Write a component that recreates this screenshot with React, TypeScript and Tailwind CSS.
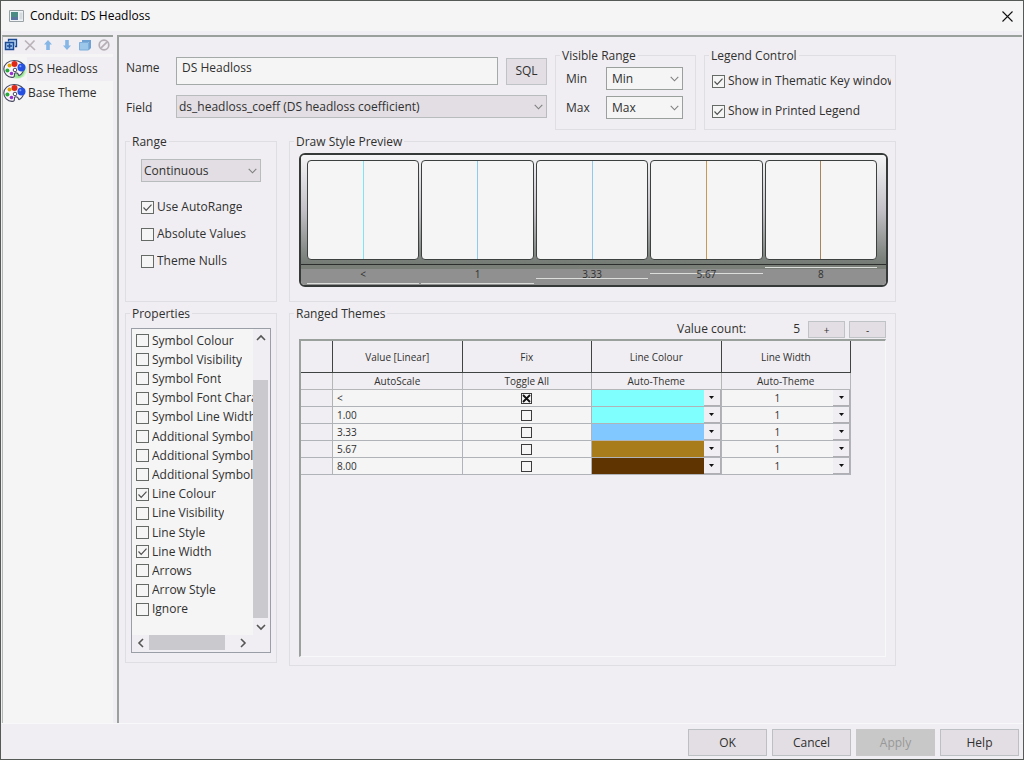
import { useState } from "react";
import type { ReactNode } from "react";
import clsx from "clsx";

const themes = [
  { value: "<", label: "<", colour: "bg-[#80ffff]", line: "bg-[#80e4f4]", mark: "top-[18px]", fix: true },
  { value: "1.00", label: "1", colour: "bg-[#80ffff]", line: "bg-[#8cccee]", mark: "top-[18px]", fix: false },
  { value: "3.33", label: "3.33", colour: "bg-[#80c8ff]", line: "bg-[#90c8f0]", mark: "top-[13px]", fix: false },
  { value: "5.67", label: "5.67", colour: "bg-[#a87c1a]", line: "bg-[#c89a50]", mark: "top-[8px]", fix: false },
  { value: "8.00", label: "8", colour: "bg-[#603400]", line: "bg-[#a88458]", mark: "top-[2px]", fix: false },
];

const properties = [
  { name: "Symbol Colour" },
  { name: "Symbol Visibility" },
  { name: "Symbol Font" },
  { name: "Symbol Font Chara" },
  { name: "Symbol Line Width" },
  { name: "Additional Symbol" },
  { name: "Additional Symbol" },
  { name: "Additional Symbol" },
  { name: "Line Colour", checked: true },
  { name: "Line Visibility" },
  { name: "Line Style" },
  { name: "Line Width", checked: true },
  { name: "Arrows" },
  { name: "Arrow Style" },
  { name: "Ignore" },
];

function Group({ title, className, children }: { title: string; className?: string; children: ReactNode }) {
  return (
    <fieldset className={clsx("min-w-0 border border-[#dfdfe3]", className)}>
      <legend className="ml-1 h-4 px-[2px] leading-[18px]">{title}</legend>
      {children}
    </fieldset>
  );
}

function Check({ label, checked }: { label: string; checked?: boolean }) {
  return (
    <label className="flex h-4 min-w-0 items-center gap-[3px]">
      <span className="grid shrink-0">
        <input
          type="checkbox"
          defaultChecked={checked}
          className="peer size-[13px] appearance-none border border-[#666a66] bg-[#f5f5f5] [grid-area:1/1]"
        />
        <svg
          viewBox="0 0 13 13"
          className="pointer-events-none size-[13px] opacity-0 [grid-area:1/1] peer-checked:opacity-100"
        >
          <path d="M2.5 6.5l2.7 2.8 5.3-5.6" fill="none" stroke="#505050" strokeWidth="1.2" />
        </svg>
      </span>
      <span className="min-w-0 overflow-hidden whitespace-nowrap leading-4">{label}</span>
    </label>
  );
}

function Combo({
  id,
  label,
  options,
  className,
}: {
  id?: string;
  label?: string;
  options: string[];
  className?: string;
}) {
  return (
    <div className="grid items-center">
      <select
        id={id}
        aria-label={label}
        className={clsx("w-full min-w-0 appearance-none border [grid-area:1/1]", className)}
      >
        {options.map((o) => (
          <option key={o}>{o}</option>
        ))}
      </select>
      <svg viewBox="0 0 9 6" className="pointer-events-none mr-1 h-[6px] w-[9px] justify-self-end [grid-area:1/1]">
        <path d="M.7.8l3.8 4 3.8-4" fill="none" stroke="#808080" strokeWidth="1.1" />
      </svg>
    </div>
  );
}

function Arrow({ d }: { d: string }) {
  return (
    <svg viewBox="0 0 10 10" className="size-[10px]">
      <path d={d} fill="none" stroke="#555" strokeWidth="1.6" />
    </svg>
  );
}

function DropArrow() {
  return (
    <svg viewBox="0 0 5 3" className="h-[3px] w-[5px]">
      <path d="M0 0h5L2.5 3z" fill="#111" />
    </svg>
  );
}

function Palette({ active }: { active?: boolean }) {
  return (
    <svg viewBox="0 0 24 20" className="h-5 w-6 shrink-0">
      {active && (
        <>
          <ellipse cx="14" cy="11" rx="10" ry="9" fill="#b4efb0" opacity=".6" />
          <ellipse cx="15" cy="11" rx="7" ry="8" fill="#7ee27a" opacity=".7" />
        </>
      )}
      <path
        d="M11 1.5C5 1.5.8 5.5.8 10S4.500 18.200 9 18.400c3 .1 2.300-2 2.500-3.500.2-1.600 2-1.200 3-.6 1.200.7.500 2.300 1.600 2.300C18.800 15.500 21 12 21 9c0-4.500-4.500-7.500-10-7.500z"
        fill="#f7f5fa"
        stroke="#46465e"
        strokeWidth="1.1"
      />
      <circle cx="12" cy="11" r="1.800" fill="#fff" stroke="#46465e" />
      <circle cx="6.500" cy="6.500" r="2" fill="#e0a000" />
      <circle cx="11.500" cy="5" r="3" fill="#e02818" />
      <circle cx="4.400" cy="11.500" r="2" fill="#28a838" />
      <circle cx="8.500" cy="14.500" r="1.800" fill="#9a30d0" />
      <circle cx="18.500" cy="8.500" r="4" fill="#2850e0" />
      <circle cx="17.400" cy="7.200" r="1" fill="#86a4ff" />
    </svg>
  );
}

const tools = [
  {
    name: "New theme",
    icon: (
      <>
        <path d="M5.500 4.500V2.500h8v7H12" fill="#b8d4f0" stroke="#1c4a94" strokeWidth="1.300" />
        <path d="M2.500 5.500h8v7h-8z" fill="#9cc4ec" stroke="#1c4a94" strokeWidth="1.500" />
        <path d="M6.500 6.500v5M4 9h5" stroke="#1c4a94" strokeWidth="1.500" />
      </>
    ),
  },
  {
    name: "Delete",
    icon: <path d="M3 3.500l10 9.500M12.500 3.500l-9 9.500" fill="none" stroke="#b9b2b9" strokeWidth="1.700" />,
  },
  { name: "Move up", icon: <path d="M8 3l4 4.500H9.800V13H6.200V7.500H4z" fill="#86b6e6" /> },
  { name: "Move down", icon: <path d="M8 13l4-4.500H9.800V3H6.200v5.500H4z" fill="#86b6e6" /> },
  {
    name: "Copy",
    icon: (
      <>
        <path d="M5 3h9v8l-2 2V5H5z" fill="#6fa2d2" />
        <path d="M2.500 5.500h9v7.500h-9z" fill="#9cc6ea" stroke="#7eaedb" />
      </>
    ),
  },
  {
    name: "Clear",
    icon: (
      <>
        <circle cx="8" cy="8" r="4.800" fill="none" stroke="#b5aeb5" strokeWidth="1.700" />
        <path d="M4.800 11.200l6.400-6.400" stroke="#b5aeb5" strokeWidth="1.700" />
      </>
    ),
  },
];

function Sidebar() {
  return (
    <aside className="w-[111px] shrink-0 border-t-2 border-l border-t-[#9aa09c] border-l-[#b4b8b6] bg-[#f5f5f5]">
      <div className="flex h-[17px] justify-between bg-[#f0eef2] pr-px">
        {tools.map((tool) => (
          <button key={tool.name} type="button" aria-label={tool.name} className="size-4">
            <svg viewBox="0 0 16 16" className="size-4">
              {tool.icon}
            </svg>
          </button>
        ))}
      </div>
      <ul className="mt-[3px]">
        <li className="flex h-6 items-center">
          <Palette active />
          <span className="h-6 flex-1 bg-[#f0eef2] pl-px leading-6">DS Headloss</span>
        </li>
        <li className="flex h-6 items-center">
          <Palette />
          <span className="h-6 flex-1 pl-px leading-6">Base Theme</span>
        </li>
      </ul>
    </aside>
  );
}

function Preview() {
  return (
    <div className="overflow-hidden rounded-md border-2 border-[#353a38]">
      <div className="flex gap-[2px] bg-linear-to-b from-[#f5f5f7] via-[#c4c2c8] to-[#747a74] pt-[5px] pr-[9px] pb-1 pl-[6px]">
        {themes.map((t) => (
          <div
            key={t.value}
            className="flex h-[100px] flex-1 justify-center rounded-[4px] border border-[#3c403e] bg-[#f5f5f5]"
          >
            <div className={clsx("w-px", t.line)} />
          </div>
        ))}
      </div>
      <div className="flex h-[21px] gap-[2px] border-t border-[#2b2e2c] bg-linear-to-b from-[#7a8078] from-20% via-[#909090] via-20% to-[#909090] to-80% pr-[9px] pl-[6px] text-[10px] leading-[18px]">
        {themes.map((t) => (
          <div key={t.value} className="relative flex-1 text-center">
            <div className={clsx("absolute inset-x-0 h-px bg-[#dcdedc]", t.mark)} />
            <span className="relative">{t.label}</span>
          </div>
        ))}
      </div>
    </div>
  );
}

function PropertyList() {
  return (
    <div className="h-[325px] border border-[#9a9ea6] bg-[#f0eef2] pr-[2px]">
      <div className="flex h-[306px]">
        <div className="min-w-0 flex-1 overflow-hidden bg-[#f5f5f5] pt-[2px] pl-1">
          <ul className="grid h-[288px] auto-rows-fr items-center">
            {properties.map((p, i) => (
              <li key={i} className="min-w-0">
                <Check label={p.name} checked={p.checked} />
              </li>
            ))}
          </ul>
        </div>
        <div className="flex w-[15px] shrink-0 flex-col">
          <button type="button" aria-label="Scroll up" className="grid h-[17px] place-items-center">
            <Arrow d="M1 7l4-4 4 4" />
          </button>
          <div className="flex flex-1 items-end">
            <div className="h-[238px] w-full bg-[#c9c9ce]" />
          </div>
          <button type="button" aria-label="Scroll down" className="grid h-[17px] place-items-center">
            <Arrow d="M1 3l4 4 4-4" />
          </button>
        </div>
      </div>
      <div className="mr-[17px] flex h-[15px]">
        <button type="button" aria-label="Scroll left" className="grid w-[17px] place-items-center">
          <Arrow d="M7 1L3 5l4 4" />
        </button>
        <div className="flex-1">
          <div className="h-full w-[76px] bg-[#c9c9ce]" />
        </div>
        <button type="button" aria-label="Scroll right" className="grid w-[17px] place-items-center">
          <Arrow d="M3 1l4 4-4 4" />
        </button>
      </div>
    </div>
  );
}

function ThemeTable() {
  const head = "h-8 border-r border-b border-[#3f4341] p-0 font-normal";
  const sub = "h-[17px] border-r border-b border-[#b4b6b8] p-0 font-normal";
  const cell = "h-[17px] border-r border-b border-[#b0b4b8] p-0";
  return (
    <table className="w-[550px] table-fixed border-separate border-spacing-0 text-[10px] leading-4">
      <colgroup>
        <col className="w-[32px]" />
        <col />
        <col />
        <col />
        <col />
      </colgroup>
      <thead>
        <tr>
          <th className={head} />
          <th className={head}>Value [Linear]</th>
          <th className={head}>Fix</th>
          <th className={head}>Line Colour</th>
          <th className={head}>Line Width</th>
        </tr>
        <tr>
          <th className={sub} />
          <th className={sub}>AutoScale</th>
          <th className={sub}>Toggle All</th>
          <th className={sub}>Auto-Theme</th>
          <th className={sub}>Auto-Theme</th>
        </tr>
      </thead>
      <tbody>
        {themes.map((t) => (
          <tr key={t.value} className="bg-[#f5f5f5]">
            <td className={clsx(cell, "bg-[#f0eef2]")} />
            <td className={clsx(cell, "pl-1")}>{t.value}</td>
            <td className={cell}>
              <label className="grid justify-center">
                <input
                  type="checkbox"
                  aria-label={"Fix " + t.value}
                  defaultChecked={t.fix}
                  className="peer size-[11px] appearance-none border border-[#3c3c3c] [grid-area:1/1]"
                />
                <svg
                  viewBox="0 0 11 11"
                  className="pointer-events-none size-[11px] opacity-0 [grid-area:1/1] peer-checked:opacity-100"
                >
                  <path d="M2 2l7 7M9 2l-7 7" stroke="#111" strokeWidth="1.800" />
                </svg>
              </label>
            </td>
            <td className={cell}>
              <div className="flex h-4">
                <div className={clsx("flex-1", t.colour)} />
                <button
                  type="button"
                  aria-label={"Colour for " + t.value}
                  className="grid w-[17px] place-items-center border-r border-b border-[#b0aeb2] bg-[#f0eef2]"
                >
                  <DropArrow />
                </button>
              </div>
            </td>
            <td className={cell}>
              <div className="grid h-4 grid-rows-1">
                <select
                  aria-label={"Line width for " + t.value}
                  className="h-4 w-full appearance-none pr-[17px] text-center [grid-area:1/1] [text-align-last:center]"
                >
                  <option>1</option>
                  <option>2</option>
                  <option>3</option>
                </select>
                <span className="pointer-events-none grid w-[17px] place-items-center justify-self-end border-r border-b border-[#b0aeb2] bg-[#f0eef2] [grid-area:1/1]">
                  <DropArrow />
                </span>
              </div>
            </td>
          </tr>
        ))}
      </tbody>
    </table>
  );
}

export default function App() {
  const [name, setName] = useState("DS Headloss");

  const grey = "h-[23px] border-[#b9bcbc] bg-[#e2dee3] pl-[2px]";
  const light = "h-[23px] border-[#9aa09c] bg-[#f5f5f5] pl-[5px]";
  const small = "h-[17px] w-[37px] border border-[#bfc3c5] bg-[#e2dee3] text-[10px] leading-none";
  const action = "h-[27px] w-[79px] border border-[#bcc0c2] bg-[#e2dee3]";

  return (
    <div className="flex min-h-screen flex-col border border-[#555a57] bg-[#f0eef2] font-['Open_Sans','Noto_Sans',sans-serif] text-[12px] text-[#303030]">
      <header className="flex h-[30px] items-center bg-[#f5f5f5] pr-[10px] pl-2 text-black">
        <svg viewBox="0 0 15 12" className="h-3 w-[15px]">
          <path d="M.5.5h14v11H.5z" fill="#f0f4f6" stroke="#9aa2a6" />
          <path d="M2 2h7v8H2z" fill="#4a8c84" />
          <path d="M2 7h7v3H2z" fill="#5c74a0" />
          <path d="M10.500 2.500h3v7h-3z" fill="#d4dadd" />
        </svg>
        <h1 className="ml-[6px] flex-1">Conduit: DS Headloss</h1>
        <button type="button" aria-label="Close">
          <svg viewBox="0 0 11 11" className="size-[11px]">
            <path d="M.5.5l10 10M10.500.5l-10 10" stroke="#111" strokeWidth="1.100" />
          </svg>
        </button>
      </header>

      <div className="mt-1 flex flex-1 gap-1 pr-px pl-px">
        <Sidebar />

        <main className="min-w-0 flex-1 border-t-2 border-l-2 border-[#9aa09c] pt-[10px] pr-4 pl-[6px]">
          <div className="flex w-full max-w-[771px] flex-col gap-[3px]">
            <div className="flex gap-2">
              <div className="min-w-0 flex-1 pt-[10px]">
                <div className="flex items-center">
                  <label htmlFor="name" className="w-[51px] shrink-0 pb-[6px] pl-px">
                    Name
                  </label>
                  <input
                    id="name"
                    value={name}
                    onChange={(e) => setName(e.target.value)}
                    className="mr-2 h-7 min-w-0 flex-1 border border-[#a4aaa8] bg-[#f5f5f5] px-[5px] pb-2"
                  />
                  <button type="button" className="h-[27px] w-[41px] border border-[#bfc3c5] bg-[#e2dee3]">
                    SQL
                  </button>
                </div>
                <div className="mt-[10px] flex items-center">
                  <label htmlFor="field" className="w-[51px] shrink-0 pt-[2px] pl-px">
                    Field
                  </label>
                  <div className="min-w-0 flex-1">
                    <Combo id="field" options={["ds_headloss_coeff (DS headloss coefficient)"]} className={grey} />
                  </div>
                </div>
              </div>

              <Group title="Visible Range" className="w-[141px] shrink-0">
                <div className="grid grid-cols-[40px_1fr] items-center gap-y-[6px] pt-1 pr-3 pb-[10px] pl-[10px]">
                  <label htmlFor="min">Min</label>
                  <Combo id="min" options={["Min"]} className={light} />
                  <label htmlFor="max">Max</label>
                  <Combo id="max" options={["Max"]} className={light} />
                </div>
              </Group>

              <Group title="Legend Control" className="w-[192px] shrink-0">
                <div className="flex flex-col gap-[14px] pt-[10px] pr-1 pl-[7px]">
                  <Check label="Show in Thematic Key window" checked />
                  <Check label="Show in Printed Legend" checked />
                </div>
              </Group>
            </div>

            <div className="flex gap-3">
              <Group title="Range" className="w-[152px] shrink-0">
                <div className="flex flex-col gap-[11px] px-[15px] pt-[10px]">
                  <div className="pb-[6px]">
                    <Combo label="Range type" options={["Continuous"]} className={grey} />
                  </div>
                  <Check label="Use AutoRange" checked />
                  <Check label="Absolute Values" />
                  <Check label="Theme Nulls" />
                </div>
              </Group>

              <Group title="Draw Style Preview" className="flex-1">
                <div className="pt-1 pr-[7px] pb-[14px] pl-[9px]">
                  <Preview />
                </div>
              </Group>
            </div>

            <div className="flex items-start gap-3">
              <Group title="Properties" className="w-[152px] shrink-0">
                <div className="px-[5px] pt-[7px] pb-[9px]">
                  <PropertyList />
                </div>
              </Group>

              <Group title="Ranged Themes" className="flex-1">
                <div className="pr-[9px] pb-2 pl-[9px]">
                  <div className="flex h-[18px] items-start justify-end gap-1">
                    <span className="flex w-[127px] justify-between pr-1 leading-4">
                      <span>Value count:</span>
                      <output>5</output>
                    </span>
                    <button type="button" aria-label="Add value" className={small}>
                      +
                    </button>
                    <button type="button" aria-label="Remove value" className={small}>
                      -
                    </button>
                  </div>
                  <div className="h-[318px] overflow-hidden border border-t-2 border-l-2 border-[#f8f8fa] border-t-[#9aa09c] border-l-[#9aa09c]">
                    <ThemeTable />
                  </div>
                </div>
              </Group>
            </div>
          </div>
        </main>
      </div>

      <footer className="flex justify-end gap-[5px] border-t border-[#f8f8fa] pt-[5px] pr-1 pb-[3px]">
        <button type="button" className={action}>
          OK
        </button>
        <button type="button" className={action}>
          Cancel
        </button>
        <button type="button" disabled className="h-[27px] w-[79px] bg-[#c8c8c8] text-[#989898]">
          Apply
        </button>
        <button type="button" className={action}>
          Help
        </button>
      </footer>
    </div>
  );
}
